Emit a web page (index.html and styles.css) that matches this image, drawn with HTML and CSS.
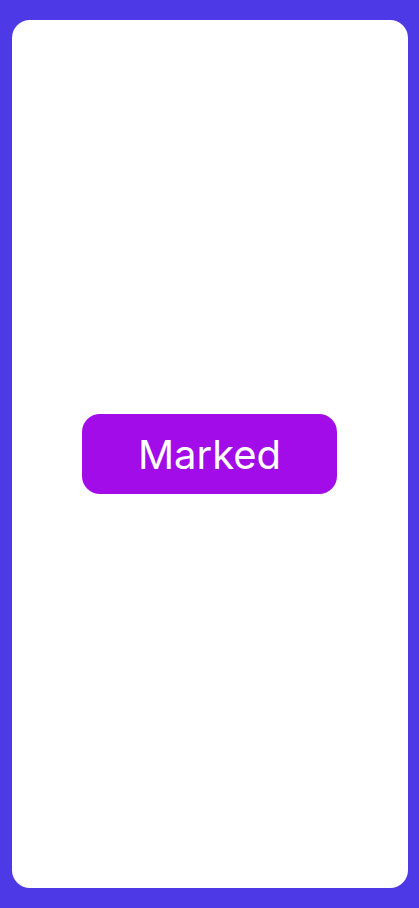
FILE: index.html
```html
<!DOCTYPE html>
<html>
<head>
<meta charset="utf-8">
<link rel="stylesheet" href="styles.css">
</head>
<body>
<div class="frame">
  <div class="card">
    <button class="marked">Marked</button>
  </div>
</div>
</body>
</html>
```
FILE: styles.css
```css
html, body {
  margin: 0;
  padding: 0;
}
body {
  background: #4d3ae6;
  font-family: Inter, "Noto Sans", sans-serif;
}
.frame {
  width: 419px;
  height: 908px;
  box-sizing: border-box;
  padding: 20px 11px 20px 12px;
  display: flex;
}
.card {
  flex: 1;
  background: #ffffff;
  border-radius: 18px;
  display: flex;
  align-items: center;
  justify-content: center;
}
.marked {
  width: 255px;
  height: 80px;
  margin-left: -1px;
  border: none;
  border-radius: 18px;
  background: #a20ce8;
  color: #ffffff;
  font-family: Inter, "Noto Sans", sans-serif;
  font-size: 40px;
  font-weight: 400;
  padding: 0;
}
```
